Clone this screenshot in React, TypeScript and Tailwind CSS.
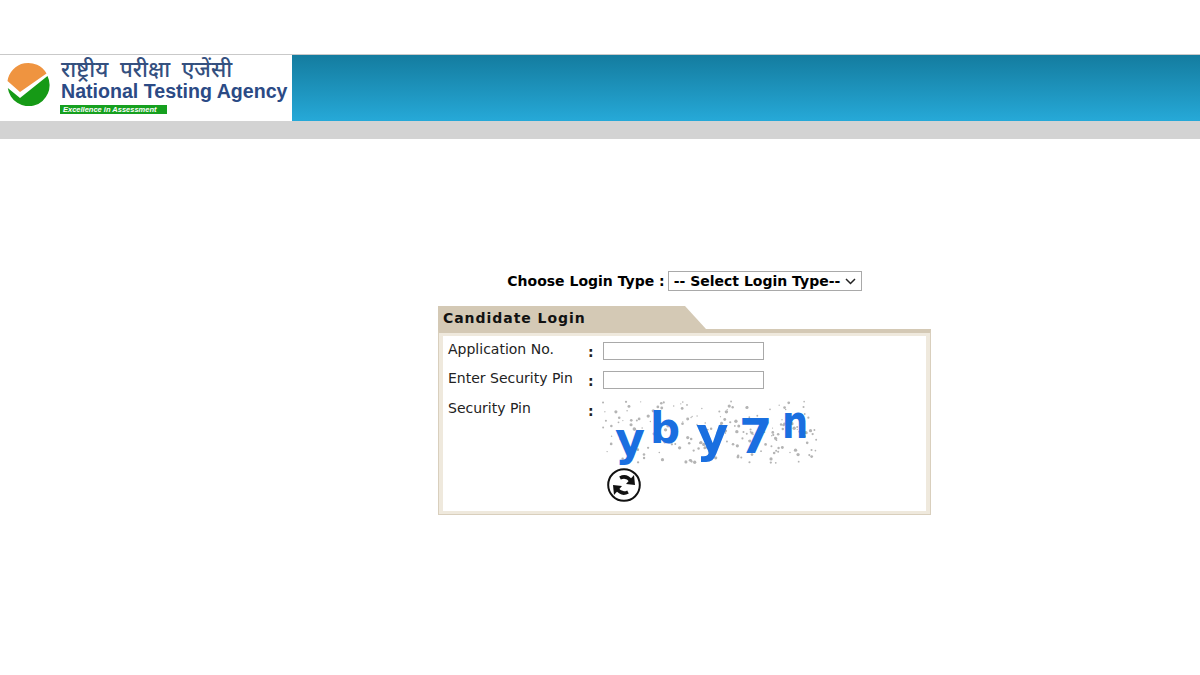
const specks: [number, number, number][] = [];
let seed = 23;
const rnd = () => {
  seed = (seed * 16807) % 2147483647;
  return seed / 2147483647;
};
for (let i = 0; i < 190; i++) {
  specks.push([rnd() * 214, rnd() * 62, 0.6 + rnd() * 1.1]);
}

function Logo() {
  return (
    <svg width="44" height="44" viewBox="0 0 44 44" className="shrink-0">
      <path d="M0.5 19 L13 30 L39.5 11.5 A21 21 0 0 0 0.5 19 Z" fill="#ef9440" />
      <path d="M0.8 26 L13 36 L40.5 14 A21 21 0 1 1 0.8 26 Z" fill="#169a16" />
    </svg>
  );
}

function Captcha() {
  return (
    <svg width="214" height="63" viewBox="0 0 214 63" className="mt-[1px] block overflow-visible">
      {specks.map(([x, y, r], i) => (
        <circle key={i} cx={x} cy={y} r={r} fill="#b4b4b4" />
      ))}
      <g fill="#1a6fe0" fontFamily="'DejaVu Sans', sans-serif" fontWeight="700">
        <text x="12" y="54" fontSize="46">y</text>
        <text x="47" y="42" fontSize="42">b</text>
        <text x="93" y="51" fontSize="50">y</text>
        <text x="136" y="52" fontSize="48">7</text>
        <text transform="translate(179 37) scale(0.8 1)" fontSize="46">n</text>
      </g>
    </svg>
  );
}

function RefreshIcon() {
  return (
    <svg width="36" height="36" viewBox="0 0 36 36" className="block">
      <circle cx="18" cy="18" r="15.8" fill="#fff" stroke="#111" strokeWidth="2" />
      <path d="M14 11 C18 9 22 10 25 14" fill="none" stroke="#111" strokeWidth="3.5" />
      <path d="M28 8 L29 18 L20 17 Z" fill="#111" />
      <path d="M22 25 C18 27 14 26 11 22" fill="none" stroke="#111" strokeWidth="3.5" />
      <path d="M8 28 L7 18 L16 19 Z" fill="#111" />
    </svg>
  );
}

function Row({ label, children }: { label: string; children: React.ReactNode }) {
  return (
    <div className="flex">
      <div className="w-[140px] text-[14px] leading-[17px] text-[#222]">{label}</div>
      <div className="w-[15px] pt-[3px] text-[14px] leading-[17px] font-bold text-[#222]">:</div>
      <div>{children}</div>
    </div>
  );
}

export default function App() {
  return (
    <div className="min-h-[675px] overflow-hidden bg-white font-['DejaVu_Sans','Noto_Sans',sans-serif] text-black">
      <div className="h-[54px]" />
      <div className="flex h-[67px] border-t border-[#c9c9c9]">
        <div className="flex w-[292px] items-start gap-[10px] bg-white pt-[7px] pl-[7px]">
          <Logo />
          <div className="-mt-[5px] flex flex-col font-['Liberation_Sans',sans-serif]">
            <div className="h-[23px] font-['Noto_Sans','Noto_Sans_Devanagari',sans-serif] text-[22px] leading-[23px] font-medium whitespace-nowrap text-[#34507f] [word-spacing:6px]">राष्ट्रीय परीक्षा एजेंसी</div>
            <div className="h-[23px] text-[19.6px] leading-[23px] font-bold whitespace-nowrap text-[#2b4a85]">National Testing Agency</div>
            <div className="-ml-[1px] mt-[2px] h-[9px] w-[107px] bg-[#16a01f] pl-[3px] text-[7.5px] leading-[9px] font-bold text-white italic">Excellence in Assessment</div>
          </div>
        </div>
        <div className="flex-1 bg-gradient-to-b from-[#147c9f] to-[#26a9d8]" />
      </div>
      <div className="h-[18px] bg-[#d3d3d3]" />

      <div className="ml-[438px] w-[493px] pt-[132px]">
        <div className="flex h-[20px] items-center justify-center gap-[3px] text-[14px] font-bold">
          <span className="pt-[1px]">Choose Login Type :</span>
          <div className="flex h-[20px] w-[194px] items-center border border-[#a9a9a9] pl-[5px]">
            <span className="whitespace-nowrap pt-[1px]">-- Select Login Type--</span>
            <svg width="11" height="7" viewBox="0 0 11 7" className="ml-[5px]">
              <path d="M1 1 L5.5 5.5 L10 1" fill="none" stroke="#222" strokeWidth="1.5" />
            </svg>
          </div>
        </div>

        <div className="mt-[15px] flex h-[23px] w-[268px] items-center bg-[#d4c9b5] pt-[1px] pl-[5px] text-[14px] font-bold tracking-[0.95px] text-[#111] [clip-path:polygon(0_0,247px_0,268px_100%,0_100%)]">
          Candidate Login
        </div>
        <div className="h-[186px] border border-t-[4px] border-[#d9cfbd] border-t-[#d4c9b5] bg-[#efe9dd] px-[4px] pt-[3px] pb-[4px]">
          <div className="flex h-[175px] flex-col bg-white pt-[5px] pl-[5px]">
            <Row label="Application No.">
              <div className="mt-[1px] h-[18px] w-[161px] border border-[#a9a9a9] bg-white" />
            </Row>
            <div className="mt-[9px]">
              <Row label="Enter Security Pin">
                <div className="mt-[1px] h-[18px] w-[161px] border border-[#a9a9a9] bg-white" />
              </Row>
            </div>
            <div className="mt-[10px]">
              <Row label="Security Pin">
                <Captcha />
                <div className="mt-[3px] ml-[3px]">
                  <RefreshIcon />
                </div>
              </Row>
            </div>
          </div>
        </div>
      </div>
    </div>
  );
}
